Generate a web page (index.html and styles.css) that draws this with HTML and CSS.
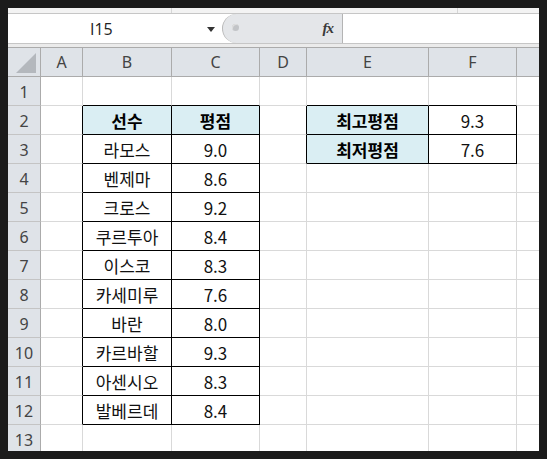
FILE: index.html
```html
<!DOCTYPE html>
<html lang="ko">
<head>
<meta charset="utf-8">
<title>Sheet</title>
<link rel="stylesheet" href="styles.css">
</head>
<body>
<div class="frame">
  <div class="strip"><span class="seg s1"></span><span class="seg s2"></span><span class="seg s3"></span></div>
  <div class="fbar">
    <div class="namebox"><span class="ref">I15</span><span class="arrow"></span></div>
    <div class="pill"><span class="dot"></span><span class="fx">fx</span></div>
    <div class="formula"></div>
  </div>
  <div class="gap"></div>
  <div class="sheet">
    <div class="hd corner"><svg class="tri" width="20" height="20" viewBox="0 0 20 20"><polygon points="0,20 20,20 20,0" fill="#b4b8bd"/></svg></div>
    <div class="hd">A</div><div class="hd">B</div><div class="hd">C</div><div class="hd">D</div><div class="hd">E</div><div class="hd">F</div><div class="hd last"></div>

    <div class="rh">1</div><div class="c"></div><div class="c bb"></div><div class="c bb"></div><div class="c"></div><div class="c bb"></div><div class="c bb"></div><div class="c last"></div>

    <div class="rh">2</div><div class="c br"></div><div class="c t th">선수</div><div class="c t th">평점</div><div class="c br"></div><div class="c t th">최고평점</div><div class="c t">9.3</div><div class="c last"></div>

    <div class="rh">3</div><div class="c br"></div><div class="c t">라모스</div><div class="c t">9.0</div><div class="c br"></div><div class="c t th">최저평점</div><div class="c t">7.6</div><div class="c last"></div>

    <div class="rh">4</div><div class="c br"></div><div class="c t">벤제마</div><div class="c t">8.6</div><div class="c"></div><div class="c"></div><div class="c"></div><div class="c last"></div>

    <div class="rh">5</div><div class="c br"></div><div class="c t">크로스</div><div class="c t">9.2</div><div class="c"></div><div class="c"></div><div class="c"></div><div class="c last"></div>

    <div class="rh">6</div><div class="c br"></div><div class="c t">쿠르투아</div><div class="c t">8.4</div><div class="c"></div><div class="c"></div><div class="c"></div><div class="c last"></div>

    <div class="rh">7</div><div class="c br"></div><div class="c t">이스코</div><div class="c t">8.3</div><div class="c"></div><div class="c"></div><div class="c"></div><div class="c last"></div>

    <div class="rh">8</div><div class="c br"></div><div class="c t">카세미루</div><div class="c t">7.6</div><div class="c"></div><div class="c"></div><div class="c"></div><div class="c last"></div>

    <div class="rh">9</div><div class="c br"></div><div class="c t">바란</div><div class="c t">8.0</div><div class="c"></div><div class="c"></div><div class="c"></div><div class="c last"></div>

    <div class="rh">10</div><div class="c br"></div><div class="c t">카르바할</div><div class="c t">9.3</div><div class="c"></div><div class="c"></div><div class="c"></div><div class="c last"></div>

    <div class="rh">11</div><div class="c br"></div><div class="c t">아센시오</div><div class="c t">8.3</div><div class="c"></div><div class="c"></div><div class="c"></div><div class="c last"></div>

    <div class="rh">12</div><div class="c br"></div><div class="c t">발베르데</div><div class="c t">8.4</div><div class="c"></div><div class="c"></div><div class="c"></div><div class="c last"></div>

    <div class="rh">13</div><div class="c"></div><div class="c"></div><div class="c"></div><div class="c"></div><div class="c"></div><div class="c"></div><div class="c last"></div>
  </div>
</div>
</body>
</html>
```
FILE: styles.css
```css
html, body {
  margin: 0;
  padding: 0;
  background: #1b1b1b;
}
body {
  width: 547px;
  height: 459px;
  overflow: hidden;
}
.frame {
  margin: 8px 0 0 8px;
  width: 531px;
  height: 443px;
  overflow: hidden;
  background: #ffffff;
  font-family: "Noto Sans", "Noto Sans CJK KR", sans-serif;
}
.strip {
  display: flex;
  height: 6px;
  box-sizing: border-box;
  background: #f3f3f3;
  border-bottom: 1px solid #c6c6c6;
}
.seg {
  display: block;
  height: 100%;
}
.s1 { width: 164px; box-sizing: border-box; border-right: 1px solid #d6d6d6; }
.s2 { width: 286px; box-sizing: border-box; border-right: 1px solid #d6d6d6; }
.s3 { flex: 1; }

.fbar {
  display: flex;
  height: 30px;
  box-sizing: border-box;
  border-bottom: 1px solid #c6c6c6;
  background: #ffffff;
}
.namebox {
  width: 214px;
  display: flex;
  align-items: center;
  box-sizing: border-box;
  padding-left: 82px;
  padding-right: 7px;
}
.ref {
  font-family: "Open Sans", "Noto Sans", sans-serif;
  font-size: 16px;
  color: #222;
  line-height: 1;
}
.arrow {
  margin-left: auto;
  width: 0;
  height: 0;
  border-left: 4px solid transparent;
  border-right: 4px solid transparent;
  border-top: 5px solid #333;
  margin-top: 2px;
}
.pill {
  width: 121px;
  box-sizing: border-box;
  background: #e4e6e9;
  border-left: 1px solid #b9b9b9;
  border-right: 1px solid #b4b4b4;
  border-radius: 15px 0 0 15px;
  display: flex;
  align-items: center;
  padding-left: 9px;
  padding-right: 9px;
}
.dot {
  width: 7px;
  height: 7px;
  margin-top: -2px;
  border-radius: 50%;
  background: #c2c4c7;
  box-shadow: inset 1px 1px 0 #dedede;
}
.fx {
  margin-left: auto;
  font-family: "Liberation Serif", "DejaVu Serif", serif;
  font-style: italic;
  font-weight: bold;
  font-size: 15px;
  color: #3a3a3a;
  letter-spacing: -1px;
  line-height: 1;
}
.formula { flex: 1; }

.gap {
  height: 4px;
  box-sizing: border-box;
  background: #ebebeb;
  border-bottom: 1px solid #ababab;
}

.sheet {
  display: grid;
  grid-template-columns: 33px 42px 89px 88px 47px 122px 88px 1fr;
  grid-auto-rows: 29px;
}
.sheet > div {
  box-sizing: border-box;
  display: flex;
  align-items: center;
  justify-content: center;
}
.hd {
  background: #dfe3e8;
  border-right: 1px solid #ababab;
  border-bottom: 1px solid #ababab;
  font-size: 16px;
  color: #444;
}
.hd.last { border-right: none; }
.corner {
  position: relative;
}
.tri {
  position: absolute;
  right: 4px;
  bottom: 3px;
}
.rh {
  background: #dfe3e8;
  border-right: 1px solid #ababab;
  border-bottom: 1px solid #c4c4c4;
  font-size: 16px;
  color: #444;
  padding-top: 1px;
}
.c {
  border-right: 1px solid #d9d9d9;
  border-bottom: 1px solid #d9d9d9;
  font-family: "Noto Sans CJK KR", "Noto Sans", sans-serif;
  font-size: 17px;
  color: #111;
}
.c.last { border-right: none; }
.c.br { border-right-color: #000; }
.c.bb { border-bottom-color: #000; }
.c.t {
  border-right-color: #000;
  border-bottom-color: #000;
}
.c.th {
  background: #daeef3;
  font-weight: bold;
  color: #000;
}
```
